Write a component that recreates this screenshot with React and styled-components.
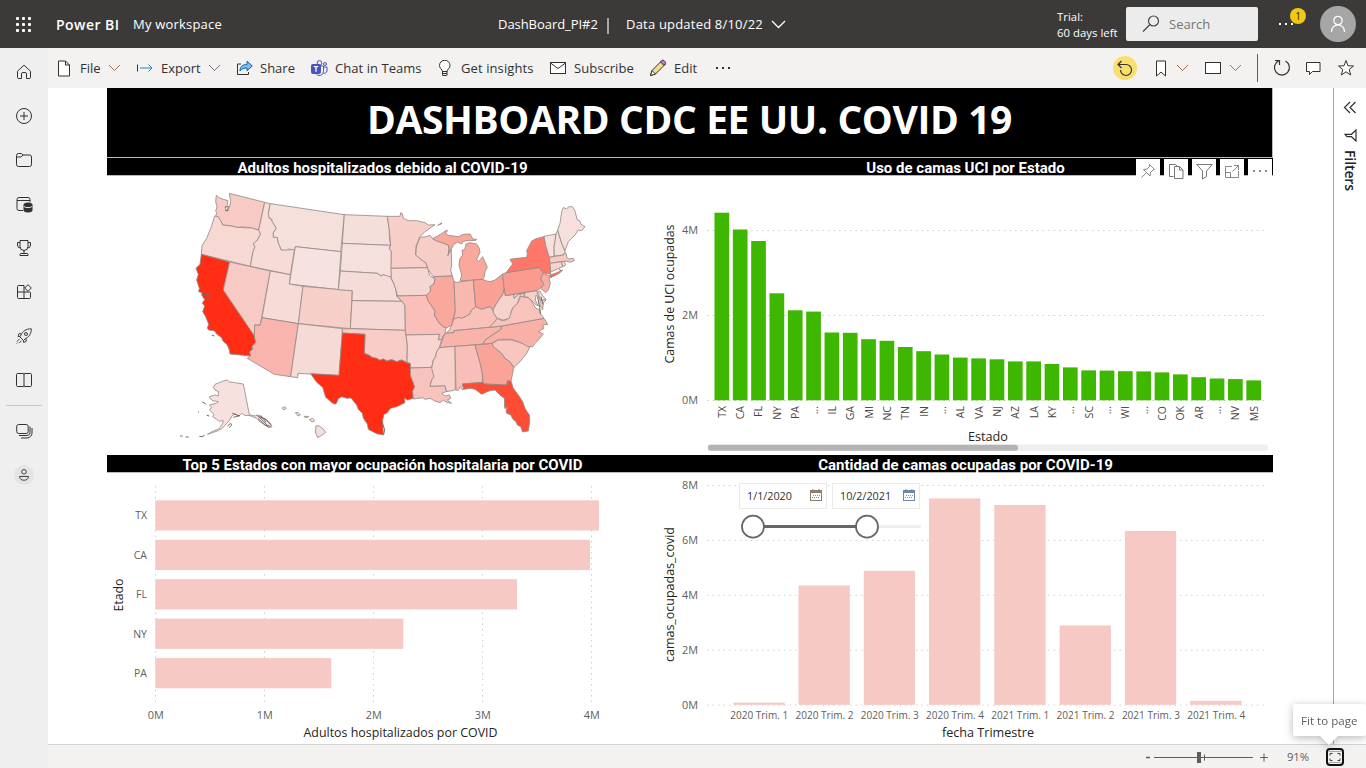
import React from "react";
import styled, { createGlobalStyle } from "styled-components";

const Global = createGlobalStyle`
  * { box-sizing: border-box; }
  body { margin: 0; background: #fff; overflow: hidden; font-family: "Open Sans", "Noto Sans", sans-serif; }
  svg { display: block; }
`;

const Shell = styled.div`
  width: 1366px; height: 768px; display: flex; flex-direction: column; overflow: hidden;
`;
const Text = styled.span`
  font-size: ${(p) => p.$size || 13}px;
  font-weight: ${(p) => p.$weight || 400};
  letter-spacing: ${(p) => p.$ls || 0}px;
  color: ${(p) => p.$color || "#323130"};
  white-space: nowrap;
`;
const Slot = styled.div`
  width: ${(p) => p.$w}px; flex: none; display: flex; align-items: center;
  padding-left: ${(p) => p.$pl || 0}px; margin-top: ${(p) => p.$mt || 0}px;
`;

/* Header */
const Header = styled.header`
  height: 48px; flex: none; background: #3b3a39; display: flex; align-items: center;
  padding-left: 15px;
`;
const Divider = styled.i`
  width: 2px; height: 16px; flex: none; background: #a8a6a4; margin: 3px 17px 0 0;
`;
const Trial = styled.div`
  display: flex; flex-direction: column; width: 69px; line-height: 16px; padding-top: 2px;
`;
const Search = styled.div`
  width: 132px; height: 34px; background: #edecec; border-radius: 2px; display: flex; align-items: center;
  padding-left: 16px; gap: 9px;
`;
const More = styled.div`
  position: relative; width: 62px; height: 48px; display: flex; align-items: center; padding: 0 0 0 20px;
`;
const Badge = styled.span`
  position: absolute; left: 32px; top: 8px; width: 16px; height: 16px; border-radius: 50%;
  background: #f2c811; color: #222; font-size: 10px; line-height: 16px; text-align: center;
`;
const Avatar = styled.div`
  width: 36px; height: 36px; border-radius: 50%; background: #a6a6a6; display: grid; place-items: center;
`;

/* Frame */
const Body = styled.div`flex: 1; display: flex; min-height: 0;`;
const Nav = styled.nav`
  width: 48px; flex: none; background: #efefef; display: flex; flex-direction: column; align-items: center;
  padding-top: 2px;
`;
const NavItem = styled.div`
  width: 48px; height: 44px; display: grid; place-items: center;
`;
const NavLine = styled.div`width: 36px; height: 1px; background: #c8c6c4; margin: 3px 0;`;
const Person = styled.div`
  width: 20px; height: 20px; border-radius: 50%; background: #e4e4e4; display: grid; place-items: center;
`;
const Main = styled.main`flex: 1; display: flex; flex-direction: column; min-width: 0;`;
const Toolbar = styled.div`
  height: 40px; flex: none; background: #f3f2f1; display: flex; align-items: center; padding-left: 8px;
`;
const Tool = styled.div`
  width: ${(p) => p.$w}px; flex: none; display: flex; align-items: center; gap: 7px;
  & > svg:first-child { flex: none; }
`;
const Undo = styled.div`
  width: 24px; height: 24px; border-radius: 50%; background: #f8df6e; display: grid; place-items: center;
`;
const Bar = styled.i`width: 1px; height: 28px; flex: none; background: #605e5c; margin-right: 15px;`;
const Work = styled.div`flex: 1; display: flex; min-height: 0;`;
const Canvas = styled.div`flex: 1; padding-left: 59px; background: #fff;`;
const Filters = styled.aside`
  width: 33px; flex: none; border-left: 1px solid #a8a8a8; display: flex; flex-direction: column;
  align-items: center; padding-top: 13px;
`;
const FiltersLabel = styled.span`
  writing-mode: vertical-rl; font: 600 14px "Open Sans", sans-serif; color: #252423; margin-top: 8px;
  letter-spacing: -0.1px; line-height: 16px;
`;

/* Report page */
const Report = styled.div`width: 1166px; height: 656px; display: flex; flex-direction: column;`;
const Title = styled.h1`
  margin: 0; height: 70px; background: #000; color: #fff; border-bottom: 1px solid #b9b9b9;
  border-right: 1px solid #b9b9b9; text-align: center; font-weight: 700; font-size: 39px;
  line-height: 62px; letter-spacing: -0.4px; white-space: nowrap;
`;
const Row = styled.div`display: flex; height: ${(p) => p.$h}px;`;
const Panel = styled.section`
  width: ${(p) => p.$w}px; position: relative; display: flex; flex-direction: column;
`;
const PanelTitle = styled.h2`
  margin: 0; height: 18px; flex: none; background: #000; color: #fff; border-bottom: 1px solid #b9b9b9;
  font: 700 15px/20px Roboto, sans-serif; text-align: center; white-space: nowrap;
`;
const VisualTools = styled.div`position: absolute; top: 1px; right: 1px; display: flex; gap: 4px;`;
const VisualButton = styled.div`
  width: 24px; height: 24px; background: #fff; display: grid; place-items: center;
`;
const Plot = styled.svg`
  flex: none; font-family: "Open Sans", sans-serif;
`;
const Slicer = styled.div`
  position: absolute; left: 81px; top: 28px; width: 184px;
`;
const Dates = styled.div`display: flex; gap: 5px;`;
const DateBox = styled.div`
  width: 88px; height: 26px; border: 1px solid #eaeaea; background: #fff; display: flex; align-items: center;
  justify-content: space-between; padding: 0 4px 2px 7px;
`;

/* Footer */
const Footer = styled.footer`
  position: relative; height: 24px; flex: none; background: #f3f2f1; border-top: 1px solid #d6d5d4; display: flex;
  align-items: center; justify-content: flex-end; padding-right: 22px;
`;
const Fit = styled.div`
  width: 18px; height: 18px; border: 2px solid #111; border-radius: 4px; display: grid; place-items: center;
`;
const Tip = styled.div`
  position: absolute; right: 0; bottom: 32px; width: 73px; height: 32px; background: #fff; border-radius: 2px;
  filter: drop-shadow(0 2px 4px rgba(0,0,0,.28)); padding: 6px 0 0 8px; line-height: 18px;
  &::after { content: ""; position: absolute; left: 26px; bottom: -9px; border: 10px solid transparent;
    border-top-color: #fff; border-bottom: 0; }
`;

const Icon = ({ s = 16, w, h, c = "#323130", sw = 1, vb, children }) => (
  <svg width={w || s} height={h || s} viewBox={vb || `0 0 ${w || s} ${h || s}`} fill="none" stroke={c} strokeWidth={sw}>
    {children}
  </svg>
);
const Chevron = ({ c = "#605e5c", accent }) => (
  <Icon w={13} h={8} c={accent || c}><path d="M1 1l5.5 5.5L12 1" /></Icon>
);
const Dots = ({ c, gap = 5.5, r = 1 }) => (
  <svg width="17" height="4" fill={c}>
    {[0, 1, 2].map((i) => <rect key={i} x={1 + i * gap} y="1" width={r * 2} height={r * 2} />)}
  </svg>
);
const Calendar = ({ a, b }) => (
  <Icon w={12} h={13} c={a}>
    <rect x=".5" y="1.500" width="11" height="10" fill="#fff" /><path d="M1 3h10" strokeWidth="2" />
    <path d="M3 0v3M9 0v3" /><path d="M3 6.5h7M2 8.5h8" stroke={b} strokeDasharray="1 1" />
  </Icon>
);

const navIcons = [
  <Icon key="home"><path d="M1.5 7.2L8 1.2l6.500 6v6.300a1 1 0 0 1-1 1h-3V10a1.500 1.500 0 0 0-1.500-1.500H7A1.500 1.500 0 0 0 5.500 10v4.500h-3a1 1 0 0 1-1-1z" /></Icon>,
  <Icon key="plus"><circle cx="8" cy="8" r="7.500" /><path d="M8 4v8M4 8h8" /></Icon>,
  <Icon key="folder"><path d="M.5 3.500a2 2 0 0 1 2-2h3l1.500 1.500h6.500a2 2 0 0 1 2 2v7.500a2 2 0 0 1-2 2h-11a2 2 0 0 1-2-2zM.5 5h4.500L7 3" /></Icon>,
  <Icon key="data" s={17}><path d="M7 14.500H3a2 2 0 0 1-2-2v-9a2 2 0 0 1 2-2h9a2 2 0 0 1 2 2V6M1 4.500h13" /><path d="M8 8.500c0-2 8-2 8 0v6c0 2-8 2-8 0z" fill="#323130" /><path d="M8 10.500c1.500 1.500 6.500 1.500 8 0" stroke="#efefef" /></Icon>,
  <Icon key="cup"><path d="M4 .5h8v6a4 4 0 0 1-8 0zM4 2.500H1.500V5a3 3 0 0 0 3 3M12 2.500h2.500V5a3 3 0 0 1-3 3M8 10.500v3M4 15.500v-1a1 1 0 0 1 1-1h6a1 1 0 0 1 1 1v1z" /></Icon>,
  <Icon key="apps"><path d="M1.500 2.500a1 1 0 0 1 1-1H8v13H2.500a1 1 0 0 1-1-1zM1.500 8h12a1 1 0 0 1 1 1v4.500a1 1 0 0 1-1 1H8M12 .7L15.300 4 12 7.300 8.700 4z" /></Icon>,
  <Icon key="rocket" sw={0.95}><path d="M5 7C7 3 10 .8 15.300.8 15.300 6 13 9 9 11L7.500 12.500 3.800 8.800zM5.500 6L3 5.500 2 8.500l2 .3M10 10.500l.3 2.700-2.600 1.300-.4-2M3.500 11L1 13.500M5.500 12.800L3.300 15M.8 15.500l1-1" /><circle cx="10" cy="6" r="1.500" /></Icon>,
  <Icon key="book"><path d="M8 2.500v11M1.500 1.500H7a1 1 0 0 1 1 1 1 1 0 0 1 1-1h5.500a1 1 0 0 1 1 1v11a1 1 0 0 1-1 1H9a1 1 0 0 1-1-1 1 1 0 0 1-1 1H1.500a1 1 0 0 1-1-1v-11a1 1 0 0 1 1-1z" /></Icon>,
];

const states = [
  ["#f8cac4", "139,46 149,54 160,58 174,62 172,75 165,82 170,92 178,82 182,65 178,40 284,67 266,150 245,144 222,141 200,142 185,138 158,135 152,122 137,108 141,98 137,94 141,80 137,65"],
  ["#f7d8d3", "134,108 145,110 152,122 158,135 185,138 200,142 245,144 266,150 272,162 262,180 250,192 255,200 249,215 241,259 94,223 96,196 110,175 124,140"],
  ["#f6dbd7", "284,67 301,71 295,100 298,115 305,117 307,125 319,145 310,158 310,170 322,172 325,188 334,210 350,207 358,210 374,207 361,284 241,259 249,215 255,200 250,192 262,180 272,162 266,150"],
  ["#f5e0db", "301,71 523,104 512,215 376,200 374,210 358,207 350,210 334,210 325,188 322,172 310,172 310,158 319,145 307,125 305,117 298,115 295,100"],
  ["#f6e2e0", "376,200 513,215 505,329 358,312"],
  ["#ff2d13", "94,223 179,246 160,330 253,467 257,487 246,500 248,507 239,516 242,528 180,522 178,510 172,495 158,482 155,473 140,462 134,453 116,450 112,444 116,433 107,410 98,395 104,378 97,370 104,358 95,345 96,338 86,335 88,325 80,300 85,283 78,265 90,253"],
  ["#f8cac5", "179,246 301,273 275,412 270,436 254,435 253,467 160,330"],
  ["#f7dbd7", "301,273 361,284 358,312 399,319 385,431 276,413"],
  ["#f7cfc9", "399,319 547,332 541,446 385,431"],
  ["#f9b5ad", "276,413 385,431 362,590 313,583 232,535 242,528 239,516 248,507 246,500 257,487 253,467 254,435 270,436"],
  ["#f6dad6", "385,431 518,446 507,586 422,582 384,580 383,593 362,590"],
  ["#f5dfda", "523,104 652,109 658,150 658,170 662,196 517,190"],
  ["#f5e0de", "517,190 662,196 658,205 664,215 664,290 655,291 640,284 633,288 622,280 511,273"],
  ["#f6dcd8", "511,273 622,280 633,288 640,284 660,290 672,312 678,330 680,348 695,364 546,362 547,332 505,329"],
  ["#f6d7d3", "546,362 695,364 702,370 705,378 706,451 541,446"],
  ["#f8cdc7", "517,447 541,446 706,451 712,495 711,547 695,540 680,545 665,539 650,543 640,537 630,541 610,536 600,527 583,520 585,463 517,459"],
  ["#ff2d13", "517,459 585,463 583,520 600,527 603,531 620,535 630,541 640,537 650,543 665,539 680,545 695,540 710,548 721,550 721,585 734,620 728,634 730,655 713,660 703,655 705,668 680,680 662,685 650,700 642,703 638,720 640,765 620,761 595,748 592,732 580,715 577,700 565,688 560,675 543,654 530,655 515,650 505,656 498,672 490,671 467,652 458,622 440,607 422,581 507,586"],
  ["#f8cec9", "652,109 690,109 692,98 697,101 700,115 715,122 740,122 765,128 775,135 795,134 765,155 750,170 738,198 737,225 755,240 768,248 773,263 663,265 664,215 658,205 662,196 658,150"],
  ["#f6d6d1", "663,265 773,263 778,285 795,298 792,312 780,320 782,333 770,346 682,348 678,330 672,312 664,295"],
  ["#f9bfb8", "680,348 770,346 773,360 790,385 795,393 793,405 808,430 820,440 827,445 825,462 817,470 818,478 805,480 808,463 708,465 706,452 705,378 697,365"],
  ["#f7cdc8", "750,172 768,170 780,166 790,178 835,195 837,215 833,228 844,208 845,255 842,270 847,288 790,290 775,270 768,248 755,240 737,225 740,198"],
  ["#faa79c", "788,176 812,163 830,150 833,153 825,160 835,166 865,170 880,163 900,162 905,170 908,177 920,178 918,181 895,182 880,184 875,192 862,186 850,195 845,205 835,220 838,205 835,195 800,183"],
  ["#faa79c", "870,303 875,285 867,255 870,235 878,225 876,210 884,210 888,192 900,188 920,192 928,205 930,218 920,238 925,245 938,230 952,262 945,275 943,290 938,298"],
  ["#faa79c", "790,290 847,288 852,305 856,380 855,400 850,412 845,435 830,444 820,440 808,430 793,405 795,393 790,385 773,360 770,346 782,333 780,320 792,312 795,298"],
  ["#f9b8b0", "852,305 860,307 910,300 917,380 905,390 900,402 890,408 875,415 865,412 850,420 856,395"],
  ["#fba095", "910,300 938,298 950,303 960,305 975,300 997,283 1003,325 998,340 985,362 978,372 970,388 960,380 935,388 917,380"],
  ["#f9c1ba", "828,460 838,450 848,430 850,418 865,412 875,415 890,408 900,402 905,390 917,380 935,388 960,380 968,390 975,405 982,415 970,430 958,442 852,452 852,458"],
  ["#f9b3aa", "825,460 852,458 852,452 958,442 995,438 992,450 975,460 960,470 945,480 940,492 808,503 818,478"],
  ["#f7d5d1", "708,465 808,463 805,480 815,478 808,503 800,515 797,530 790,540 785,562 722,564 721,550 711,547 712,495"],
  ["#f9c3bd", "722,564 787,562 792,590 785,600 780,619 825,617 827,630 835,632 815,640 825,648 838,645 842,655 832,660 845,670 830,667 820,660 810,668 795,663 780,655 765,658 758,653 730,657 728,634 734,620 721,585"],
  ["#f7d0cb", "808,503 855,499 856,630 840,633 830,635 825,617 780,619 785,600 792,590 785,565 790,540 797,530 800,515"],
  ["#f9beb7", "855,499 915,495 932,555 937,580 938,607 877,612 882,627 878,630 870,620 865,631 858,630"],
  ["#faa398", "915,495 967,490 970,500 995,520 1005,535 1020,545 1031,562 1027,585 1023,603 1012,603 1012,615 940,612 937,580 932,555"],
  ["#ff4c35", "877,612 938,607 942,612 1010,615 1012,603 1023,603 1030,625 1045,645 1058,665 1065,685 1078,705 1079,725 1075,753 1058,756 1052,740 1042,735 1038,725 1028,717 1023,705 1010,700 1008,690 1012,682 1004,685 1003,655 990,645 975,630 960,632 950,636 935,643 925,635 915,628 900,625 882,628"],
  ["#f8c6bf", "967,490 985,480 1025,480 1040,485 1050,487 1080,500 1070,520 1050,545 1032,562 1020,545 1005,535 995,520 970,500"],
  ["#f9b0a7", "940,492 945,480 960,470 975,460 992,450 995,438 1122,415 1133,433 1118,435 1122,445 1105,455 1120,462 1105,480 1095,490 1088,500 1075,500 1050,487 1025,478 985,478 965,490"],
  ["#f9c2bb", "958,442 970,430 982,415 995,422 1008,420 1022,400 1028,383 1042,370 1055,345 1062,352 1075,352 1085,365 1098,385 1110,390 1112,402 1122,415 995,438"],
  ["#f7d3ce", "1003,325 1006,347 1030,343 1033,355 1045,343 1065,340 1060,350 1050,348 1042,370 1028,383 1022,400 1018,415 1000,420 982,415 970,398 970,388 985,362 998,345"],
  ["#f8cfca", "1030,343 1100,332 1106,352 1128,360 1120,368 1118,390 1110,375 1110,360 1098,345 1096,360 1105,378 1095,372 1075,352 1062,350 1065,340 1045,343 1033,355"],
  ["#f6dbd7", "1103,335 1110,333 1116,345 1128,358 1112,362"],
  ["#fb9a8e", "997,283 1008,278 1108,262 1120,280 1112,295 1122,313 1105,330 1006,347 1002,320"],
  ["#faada3", "1120,280 1138,288 1138,298 1141,310 1135,330 1127,338 1112,325 1122,313 1112,295"],
  ["#ff7768", "1008,278 1028,252 1020,238 1040,235 1070,232 1072,222 1070,212 1085,183 1098,176 1122,170 1128,200 1134,215 1140,235 1142,283 1120,278 1108,262"],
  ["#ff6655", "1139,286 1160,278 1178,270 1168,280 1142,293"],
  ["#f6e1df", "1122,169 1158,162 1155,185 1152,200 1153,228 1138,232 1128,200"],
  ["#f6dedb", "1158,162 1163,150 1175,190 1185,215 1180,225 1153,228 1152,200 1155,185"],
  ["#f6dfdc", "1163,150 1170,130 1175,95 1180,83 1190,86 1197,80 1207,80 1214,90 1222,120 1230,123 1233,133 1245,140 1235,152 1225,150 1215,165 1205,175 1195,185 1185,212 1175,190"],
  ["#f8c9c3", "1138,232 1180,225 1188,218 1190,230 1195,237 1210,235 1213,242 1200,247 1188,243 1178,244 1140,250"],
  ["#f7d3ce", "1140,250 1175,245 1178,260 1142,276"],
  ["#f6dedb", "1175,245 1184,244 1186,256 1178,260"],
  ["#f6e1df", "136,612 148,608 160,603 172,600 178,606 190,607 200,609 220,612 238,704 255,708 265,705 285,717 300,728 306,740 297,743 285,735 270,725 260,715 240,707 225,706 215,700 205,710 195,700 186,708 178,722 170,730 157,745 145,752 130,757 112,763 130,753 148,746 158,730 160,722 148,724 140,718 128,710 132,703 118,690 125,682 118,675 140,670 145,665 128,662 120,655 118,650 135,645 145,648 146,635 135,630 130,623"],
  ["#f6dedb", "337,683 344,680 349,684 345,689 339,688"],
  ["#f6dedb", "376,698 384,697 391,705 384,708"],
  ["#f6dedb", "403,709 416,709 414,712 404,712"],
  ["#f6dedb", "418,719 428,715 435,722 426,726"],
  ["#f6dedb", "438,737 448,738 460,747 467,757 455,766 443,773 436,756"],
  ["#faa79c", "803,136 816,128 814,132"],
];
const islets = "M30,767l5,2 3,-1M47,771l9,0M88,769l8,1 8,-4M97,666l8,4 4,4M84,695l3,2M110,706l8,2M172,738l10,-8 3,6 -8,7M260,705l20,18 12,14 10,2M268,710l20,8 14,16M264,716l22,20 10,2M272,706l16,20 M187,700l22,8 M190,712l20,-6 M125,465l8,3M98,336l4,20M98,342l22,2M165,82l10,-3 -2,14 -8,-3M636,728l8,20 -3,16M1103,352l6,30 2,20M1113,350l6,24M1167,268l6,4";

function UsMap() {
  return (
    <Plot width="551" height="279" viewBox="-189 -12 1653 837">
      <g stroke="#958a86" strokeWidth="2.5" strokeLinejoin="round">
        {states.map(([fill, pts], i) => <polygon key={i} points={pts} fill={fill} />)}
        <path d={islets} fill="none" stroke="#6f6a68" strokeWidth="3" />
      </g>
    </Plot>
  );
}

const AxisText = ({ x, y, len, children, anchor = "end", size = 10.5, color = "#605e5c", rot }) => (
  <text x={x} y={y} fontSize={size} fill={color} textAnchor={anchor} textLength={len} lengthAdjust="spacingAndGlyphs"
    transform={rot ? `rotate(-90 ${x} ${y})` : undefined}>{children}</text>
);

const uci = [
  ["TX", 212.7], ["CA", 229.5], ["FL", 241], ["NY", 293.3], ["PA", 310.3], ["...", 311.6], ["IL", 332.5], ["GA", 332.8],
  ["MI", 339.2], ["NC", 340.8], ["TN", 347], ["IN", 351.2], ["...", 354.5], ["AL", 357.6], ["VA", 358.4], ["NJ", 359.3],
  ["AZ", 361.4], ["LA", 361.4], ["KY", 364], ["...", 367.4], ["SC", 370.4], ["...", 370.6], ["WI", 371.2], ["...", 371.4],
  ["CO", 372.4], ["OK", 374.4], ["AR", 377.2], ["...", 378.5], ["NV", 379.1], ["MS", 380.4],
];

function UciChart() {
  return (
    <Plot width="615" height="279" viewBox="658 176 615 279">
      {[[230.5, "4M"], [315.5, "2M"], [400.500, "0M"]].map(([y, t]) => (
        <g key={t}>
          <path d={`M707 ${y}H1268`} stroke="#cfcfcf" strokeDasharray="1.500 4" />
          <AxisText x={698} y={y + 3.5} len={16}>{t}</AxisText>
        </g>
      ))}
      {uci.map(([s, y], i) => {
        const x = 714.5 + i * 18.34;
        return (
          <g key={i}>
            <rect x={x} y={y} width="14.700" height={400.3 - y} fill="#3db700" />
            <AxisText x={x + 11.3} y={406} rot color="#484644">{s}</AxisText>
          </g>
        );
      })}
      <AxisText x={674} y={294} rot anchor="middle" size={12} len={139} color="#252423">Camas de UCI ocupadas</AxisText>
      <AxisText x={988} y={441} anchor="middle" size={12} len={40} color="#252423">Estado</AxisText>
      <rect x="708" y="444.500" width="560" height="6.500" rx="3" fill="#efefef" />
      <rect x="708" y="444.800" width="310" height="6" rx="2.500" fill="#b3b3b3" />
    </Plot>
  );
}

const top5 = [["TX", 599, 500.3], ["CA", 590, 539.8], ["FL", 517, 579.2], ["NY", 403.300, 618.6], ["PA", 331.300, 658.1]];

function TopChart() {
  return (
    <Plot width="551" height="271" viewBox="107 473 551 271">
      {[0, 1, 2, 3, 4].map((n) => (
        <g key={n}>
          <path d={`M${155.5 + n * 109} 486V706`} stroke="#cfcfcf" strokeDasharray="1.500 4" />
          <AxisText x={155.8 + n * 109} y={719} anchor="middle" len={16}>{n + "M"}</AxisText>
        </g>
      ))}
      {top5.map(([s, x, y]) => (
        <g key={s}>
          <rect x="155.300" y={y} width={x - 155.300} height="30.200" fill="#f6c9c5" />
          <AxisText x={147} y={y + 18.900}>{s}</AxisText>
        </g>
      ))}
      <AxisText x={123} y={595} rot anchor="middle" size={12} len={33} color="#252423">Etado</AxisText>
      <AxisText x={400.5} y={737} anchor="middle" size={12} len={194} color="#252423">Adultos hospitalizados por COVID</AxisText>
    </Plot>
  );
}

const quarters = [
  ["2020 Trim. 1", 702.6], ["2020 Trim. 2", 585.4], ["2020 Trim. 3", 570.8], ["2020 Trim. 4", 498.4],
  ["2021 Trim. 1", 505], ["2021 Trim. 2", 625.500], ["2021 Trim. 3", 531], ["2021 Trim. 4", 700.8],
];

function QuarterChart() {
  return (
    <Plot width="615" height="271" viewBox="658 473 615 271">
      {[8, 6, 4, 2, 0].map((n, i) => (
        <g key={n}>
          <path d={`M707 ${485.5 + i * 54.9}H1268`} stroke="#cfcfcf" strokeDasharray="1.500 4" />
          <AxisText x={698} y={489 + i * 54.9} len={16}>{n + "M"}</AxisText>
        </g>
      ))}
      {quarters.map(([t, y], i) => {
        const x = 733.2 + i * 65.28;
        return (
          <g key={t}>
            <rect x={x} y={y} width="51.300" height={704.8 - y} fill="#f6c9c5" />
            <AxisText x={x + 26} y={719} anchor="middle" len={58}>{t}</AxisText>
          </g>
        );
      })}
      <AxisText x={674} y={594.5} rot anchor="middle" size={12} len={135} color="#252423">camas_ocupadas_covid</AxisText>
      <AxisText x={988} y={737} anchor="middle" size={12} len={92} color="#252423">fecha Trimestre</AxisText>
    </Plot>
  );
}

export default function App() {
  return (
    <Shell>
      <Global />
      <Header>
        <Slot $w={41}>
          <svg width="17" height="17" fill="#fff">
            {[0, 1, 2].flatMap((r) => [0, 1, 2].map((c) => <rect key={r + "" + c} x={1 + c * 6} y={1 + r * 6} width="3" height="3" rx="1" />))}
          </svg>
        </Slot>
        <Slot $w={77}><Text $size={14} $weight={600} $ls={0.45} $color="#fff">Power BI</Text></Slot>
        <Slot $w={365}><Text $color="#fff" $ls={0.2}>My workspace</Text></Slot>
        <Slot $w={109}><Text $color="#fff" $ls={-0.05}>DashBoard_PI#2</Text></Slot>
        <Divider />
        <Slot $w={145}><Text $color="#fff" $ls={0.2}>Data updated 8/10/22</Text></Slot>
        <Slot $w={286}><Icon w={15} h={9} c="#fff" sw={1.3}><path d="M1 1l6.500 6.500L14 1" /></Icon></Slot>
        <Trial>
          <Text $size={11.3} $color="#fff" $ls={0.05}>Trial:</Text>
          <Text $size={11.3} $color="#fff" $ls={0.05}>60 days left</Text>
        </Trial>
        <Search>
          <Icon s={18} c="#484644" sw={1.2}><circle cx="11.500" cy="6" r="5" /><path d="M8 9.500L1 16.500" /></Icon>
          <Text $color="#767472">Search</Text>
        </Search>
        <More><Dots c="#fff" gap={6} /><Badge>1</Badge></More>
        <Avatar><Icon s={18} c="#fff" sw={1.2}><circle cx="9" cy="5.500" r="4.200" /><path d="M2.500 17c0-9.500 13-9.500 13 0" /></Icon></Avatar>
      </Header>
      <Body>
        <Nav>
          {navIcons.map((n, i) => <NavItem key={i}>{n}</NavItem>)}
          <NavLine />
          <NavItem>
            <Icon s={17}><rect x=".7" y="1.500" width="11.500" height="9" rx="2" /><path d="M14 3.500v6a3 3 0 0 1-3 3H3M16 5v5a5 5 0 0 1-5 5H5" /></Icon>
          </NavItem>
          <NavItem>
            <Person><Icon s={12} c="#444"><circle cx="6" cy="2.800" r="2.300" /><path d="M1.500 7.500h9c0 5-9 5-9 0z" /></Icon></Person>
          </NavItem>
        </Nav>
        <Main>
          <Toolbar>
            <Tool $w={80}>
              <Icon w={17} h={17}><path d="M2.500 1h7l4 4v11h-11zM9.500 1v4h4" fill="#fff" /></Icon>
              <Text>File</Text><Chevron accent="#a4704f" />
            </Tool>
            <Tool $w={100}>
              <Icon w={18} h={16}><path d="M1.500 4.500v7" /><path d="M4 8h12M12.500 4.500L16 8l-3.500 3.500" stroke="#2086c8" /></Icon>
              <Text>Export</Text><Chevron accent="#7d6d85" />
            </Tool>
            <Tool $w={75}>
              <Icon w={17} h={16}><path d="M1.500 4v10.500h11V12M1.500 4H5" /><path d="M4 11c0-5 3-6.500 7-6.500V1.200L16.300 6 11 10.800V8C8 8 6 8.500 4 11z" fill="#7fbdea" stroke="#1467a8" /></Icon>
              <Text>Share</Text>
            </Tool>
            <Tool $w={125}>
              <Icon w={17} h={17} c="#4b53bc"><circle cx="8.500" cy="3" r="2.400" fill="#f3f2f1" /><circle cx="14" cy="4" r="1.500" fill="#f3f2f1" /><path d="M5 6h7.500v5.500a4 4 0 0 1-7.500 2zM12.500 7H16v4a2.500 2.500 0 0 1-3.500 2" fill="#f3f2f1" /><rect x=".5" y="4.500" width="9" height="9" rx="1" fill="#4b53bc" /><path d="M2.800 6.700h4.400M5 6.700v5" stroke="#fff" strokeWidth="1.300" /></Icon>
              <Text $ls={0.05}>Chat in Teams</Text>
            </Tool>
            <Tool $w={113}>
              <Icon w={18} h={17}><path d="M6.500 11.500c0-2-3-3-3-6a5 5 0 0 1 10.500 0c0 3-3 4-3 6z" fill="#fff" /><path d="M6.500 13.500h4.500M7 15.500h3.500M6.500 11v4.500M11 11v4.500" /></Icon>
              <Text $ls={0.1}>Get insights</Text>
            </Tool>
            <Tool $w={100}>
              <Icon w={18} h={16}><rect x="1.500" y="2.500" width="15" height="11" fill="#fff" /><path d="M1.500 3L9 8.500 16.500 3" /></Icon>
              <Text $ls={0.05}>Subscribe</Text>
            </Tool>
            <Tool $w={66}>
              <Icon w={18} h={18}><path d="M1.500 16.500L3 11.500 12.500 2l3.500 3.500L6.500 15z" fill="#f9dc8a" /><path d="M11.500 3L13 1.300c1-1 4.500 2 3.500 3.500L15 6.500z" fill="#c57fc5" /><path d="M3 11.500l3.500 3.500-5 1.500z" fill="#fff" /></Icon>
              <Text>Edit</Text>
            </Tool>
            <Slot $w={398}><Dots c="#323130" gap={6} /></Slot>
            <Slot $w={40}>
              <Undo><Icon s={18} c="#323130" sw={1.2}><path d="M2 5.500h8a5.500 5.500 0 1 1-5.500 5.500M5.500 2L2 5.500 5.500 9" /></Icon></Undo>
            </Slot>
            <Tool $w={51}>
              <Icon w={16} h={17}><path d="M3.500 1h9v15L8 12l-4.500 4z" fill="#fff" /></Icon><Chevron accent="#a4704f" />
            </Tool>
            <Tool $w={53}>
              <Icon w={18} h={16}><rect x="1.500" y="2.500" width="15" height="11" fill="#fff" /></Icon><Chevron accent="#a4704f" />
            </Tool>
            <Bar />
            <Slot $w={32}><Icon s={18} sw={1.2}><path d="M12.500 2a7.500 7.500 0 1 1-7-.1M2 1.500h4.500V6" /></Icon></Slot>
            <Slot $w={32}><Icon s={17}><path d="M1.500 2.500h13.500v9H7.500L4.500 14.500v-3h-3z" fill="#fff" /></Icon></Slot>
            <Slot $w={20}><Icon s={18}><path d="M9 1.500l2 5.300 5.500.2-4.300 3.500 1.500 5.500L9 12.800 4.300 16l1.500-5.500L1.500 7l5.500-.2z" fill="#fff" /></Icon></Slot>
          </Toolbar>
          <Work>
            <Canvas>
              <Report>
                <Title>DASHBOARD CDC EE UU. COVID 19</Title>
                <Row $h={297}>
                  <Panel $w={551}><PanelTitle>Adultos hospitalizados debido al COVID-19</PanelTitle><UsMap /></Panel>
                  <Panel $w={615}>
                    <PanelTitle>Uso de camas UCI por Estado</PanelTitle>
                    <UciChart />
                    <VisualTools>
                      <VisualButton><Icon s={16} c="#8a8886"><path d="M9.500 1.500l5 5-1.500.5-2.500 2.500-.5 3.500L3.500 6.500l3.500-.5L9.500 3.500zM6 10l-4.500 4.500" /></Icon></VisualButton>
                      <VisualButton><Icon s={16} c="#797775"><path d="M5.500 13.500h-4v-12h6l2 2M6.500 3.500h5l3.500 3.500v8.500H6.500zM11.500 3.500V7H15" /></Icon></VisualButton>
                      <VisualButton><Icon s={17} c="#797775"><path d="M.8 1.500h15.400L10.500 8v5.500L6.500 16V8z" /></Icon></VisualButton>
                      <VisualButton><Icon s={16} c="#8a8886"><path d="M8 3.500H1.500v11h13V8M1.500 9.500h5v5M10 2.500h4.500V7M14.500 2.500L8.500 8.500" /></Icon></VisualButton>
                      <VisualButton><Dots c="#8a8886" gap={6} /></VisualButton>
                    </VisualTools>
                  </Panel>
                </Row>
                <Row $h={289}>
                  <Panel $w={551}><PanelTitle>Top 5 Estados con mayor ocupación hospitalaria por COVID</PanelTitle><TopChart /></Panel>
                  <Panel $w={615}>
                    <PanelTitle>Cantidad de camas ocupadas por COVID-19</PanelTitle>
                    <QuarterChart />
                    <Slicer>
                      <Dates>
                        <DateBox><Text $size={10.8}>1/1/2020</Text><Calendar a="#8a7f70" b="#8a8886" /></DateBox>
                        <DateBox><Text $size={10.8}>10/2/2021</Text><Calendar a="#6b89a8" b="#4ba3e8" /></DateBox>
                      </Dates>
                      <svg width="184" height="36">
                        <path d="M14 17.500H182" stroke="#efefef" strokeWidth="3" />
                        <path d="M14 17.500H128" stroke="#666" strokeWidth="3" />
                        <circle cx="14" cy="17.700" r="11" fill="#fff" stroke="#666" strokeWidth="1.800" />
                        <circle cx="128" cy="17.700" r="11" fill="#fff" stroke="#666" strokeWidth="1.800" />
                      </svg>
                    </Slicer>
                  </Panel>
                </Row>
              </Report>
            </Canvas>
            <Filters>
              <Icon w={14} h={13} sw={1.2}><path d="M7 1L1.500 6.500 7 12M12.500 1L7 6.500l5.500 5.500" /></Icon>
              <Slot $w={13} $mt={15}><Icon w={13} h={13} sw={1.2}><path d="M12 1v11L7.500 7.700H3L1 5.300h6.500z" /></Icon></Slot>
              <FiltersLabel>Filters</FiltersLabel>
            </Filters>
          </Work>
          <Footer>
            <Slot $w={124}>
              <svg width="124" height="16" stroke="#605e5c">
                <path d="M1 8.500h4" strokeWidth="1.500" /><path d="M9 8.500h99" /><path d="M59.500 5.500v6" />
                <rect x="52.500" y="3.500" width="3" height="10" fill="#605e5c" /><path d="M115 8.500h8M119 4.500v8" />
              </svg>
            </Slot>
            <Slot $w={57} $pl={18}><Text $size={11.3} $ls={-0.1} $color="#605e5c">91%</Text></Slot>
            <Fit><Icon s={14} c="#444"><path d="M1 1.500h12M1 12.500h12" stroke="#aaa" /><path d="M2 5.500v-2h2.500M9.500 3.500H12v2M2 8.500v2h2.500M9.500 10.500H12v-2" /></Icon></Fit>
            <Tip><Text $size={11.5} $color="#605e5c" $ls={0.05}>Fit to page</Text></Tip>
          </Footer>
        </Main>
      </Body>
    </Shell>
  );
}
